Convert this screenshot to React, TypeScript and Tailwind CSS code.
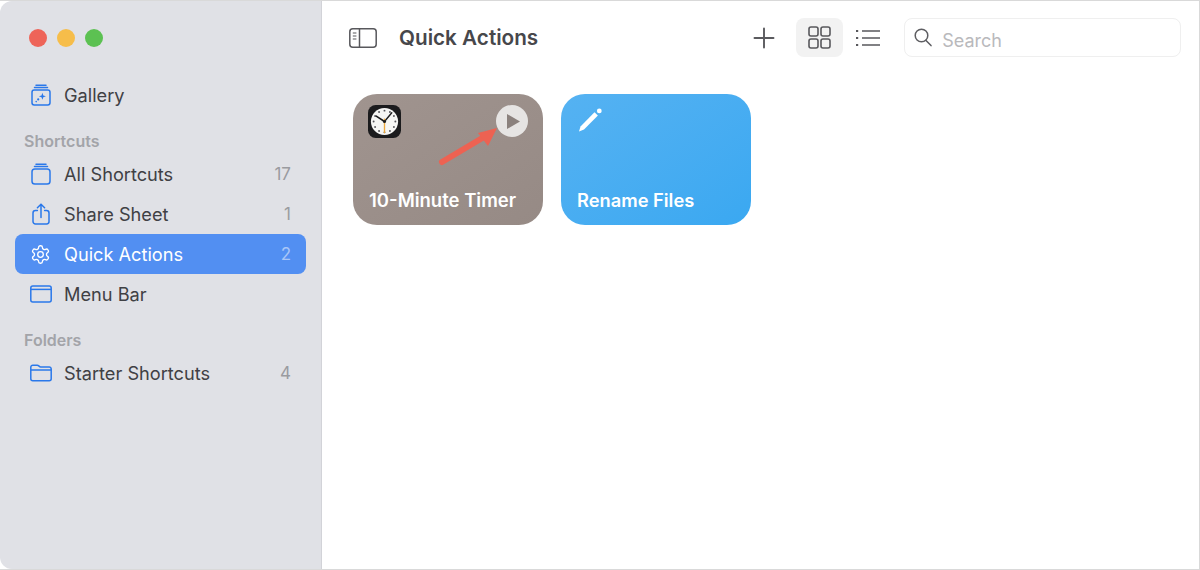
import React from "react";

const blue = "#2a78ea";

function GalleryIcon() {
  return (
    <svg width="20" height="22" viewBox="0 0 20 22" fill="none" stroke={blue} strokeWidth="1.5" strokeLinecap="round">
      <path d="M5 1.2h10" />
      <path d="M3.5 3.6h13" />
      <rect x="1" y="6" width="18" height="15" rx="2.2" />
      <path d="M11.4 8.8l.9 2.6 2.6.9-2.6.9-.9 2.6-.9-2.6-2.6-.9 2.6-.9z" fill={blue} stroke="none" />
      <circle cx="7.2" cy="15.4" r="1.1" fill={blue} stroke="none" />
      <circle cx="5.2" cy="17.6" r=".8" fill={blue} stroke="none" />
    </svg>
  );
}
function AllIcon() {
  return (
    <svg width="20" height="22" viewBox="0 0 20 22" fill="none" stroke={blue} strokeWidth="1.5" strokeLinecap="round">
      <path d="M5 1.2h10" />
      <path d="M3.5 3.6h13" />
      <rect x="1" y="6" width="18" height="15" rx="2.8" />
    </svg>
  );
}
function ShareIcon() {
  return (
    <svg width="18" height="22" viewBox="0 0 18 22" fill="none" stroke={blue} strokeWidth="1.5" strokeLinecap="round" strokeLinejoin="round">
      <path d="M5.4 7.6H3.4A2.4 2.4 0 0 0 1 10v8.6A2.4 2.4 0 0 0 3.4 21h11.2a2.4 2.4 0 0 0 2.4-2.4V10a2.4 2.4 0 0 0-2.4-2.4h-2" />
      <path d="M9 14.4V1.4" />
      <path d="M5.4 4.8L9 1.2l3.6 3.6" />
    </svg>
  );
}
function GearIcon() {
  return (
    <svg className="-ml-[2px]" width="21" height="21" viewBox="0 0 24 24" fill="none" stroke="#ffffff" strokeWidth="1.5" strokeLinecap="round" strokeLinejoin="round">
      <path d="M12.22 2h-.44a2 2 0 0 0-2 2v.18a2 2 0 0 1-1 1.73l-.43.25a2 2 0 0 1-2 0l-.15-.08a2 2 0 0 0-2.73.73l-.22.38a2 2 0 0 0 .73 2.73l.15.1a2 2 0 0 1 1 1.72v.51a2 2 0 0 1-1 1.74l-.15.09a2 2 0 0 0-.73 2.73l.22.38a2 2 0 0 0 2.73.73l.15-.08a2 2 0 0 1 2 0l.43.25a2 2 0 0 1 1 1.73V20a2 2 0 0 0 2 2h.44a2 2 0 0 0 2-2v-.18a2 2 0 0 1 1-1.73l.43-.25a2 2 0 0 1 2 0l.15.08a2 2 0 0 0 2.73-.73l.22-.39a2 2 0 0 0-.73-2.73l-.15-.08a2 2 0 0 1-1-1.74v-.5a2 2 0 0 1 1-1.74l.15-.09a2 2 0 0 0 .73-2.73l-.22-.38a2 2 0 0 0-2.73-.73l-.15.08a2 2 0 0 1-2 0l-.43-.25a2 2 0 0 1-1-1.73V4a2 2 0 0 0-2-2z" />
      <circle cx="12" cy="12" r="3.2" />
    </svg>
  );
}
function MenuBarIcon() {
  return (
    <svg width="22" height="18" viewBox="0 0 22 18" fill="none" stroke={blue} strokeWidth="1.5">
      <rect x=".8" y="1" width="20.4" height="16" rx="2" />
      <path d="M.8 4.4h20.4" />
    </svg>
  );
}
function FolderIcon() {
  return (
    <svg width="22" height="18" viewBox="0 0 22 18" fill="none" stroke={blue} strokeWidth="1.5" strokeLinejoin="round">
      <path d="M.8 3.2A2 2 0 0 1 2.8 1.2h4.4c.9 0 1.2.3 1.8.9.5.6.9.9 1.7.9h8.5a2 2 0 0 1 2 2v9.8a2 2 0 0 1-2 2H2.8a2 2 0 0 1-2-2z" />
      <path d="M.8 6h20.4" />
    </svg>
  );
}

function Row({ icon, label, count, active }: { icon: React.ReactNode; label: string; count?: string; active?: boolean }) {
  return (
    <div className={`mx-[15px] flex h-10 items-center rounded-[8px] pr-[15px] pl-[14px] ${active ? "bg-[#528ff2]" : ""}`}>
      <div className="flex w-[24px] justify-center">{icon}</div>
      <span className={`ml-[11px] flex-1 pt-[2px] text-[18.2px] ${active ? "text-white" : "text-[#3f4044]"}`}>{label}</span>
      {count && <span className={`pt-[2px] text-[17px] ${active ? "text-[#a9c6f7]" : "text-[#9a9ba0]"}`}>{count}</span>}
    </div>
  );
}

function Clock() {
  const ticks = Array.from({ length: 12 }, (_, i) => i);
  return (
    <svg width="33" height="33" viewBox="0 0 34 34">
      <rect width="34" height="34" rx="8" fill="#1b1b1d" />
      <circle cx="17" cy="17" r="14" fill="#f6f6f4" />
      {ticks.map((i) => {
        const a = (i * Math.PI) / 6;
        return <circle key={i} cx={17 + 11.2 * Math.sin(a)} cy={17 - 11.2 * Math.cos(a)} r="1" fill="#55555a" />;
      })}
      <path d="M17 17L8.5 11.5" stroke="#1b1b1d" strokeWidth="1.6" strokeLinecap="round" />
      <path d="M17 17L24.5 8" stroke="#1b1b1d" strokeWidth="1.4" strokeLinecap="round" />
      <path d="M17 14V29" stroke="#eda83c" strokeWidth="1.4" />
      <circle cx="17" cy="17" r="1.6" fill="#1b1b1d" />
    </svg>
  );
}

export default function App() {
  return (
    <div className="flex h-[570px] w-[1200px] overflow-hidden border-y border-r border-[#d9d9d9] bg-white font-['Inter',sans-serif]">
      <aside className="w-[322px] shrink-0 rounded-tl-[12px] rounded-bl-[12px] border-r border-[#d2d3d8] bg-[#e0e1e6]">
        <div className="flex gap-[10px] pt-[28px] pl-[29px]">
          <span className="h-[18px] w-[18px] rounded-full bg-[#ee6459]" />
          <span className="h-[18px] w-[18px] rounded-full bg-[#f6bd4a]" />
          <span className="h-[18px] w-[18px] rounded-full bg-[#5cc152]" />
        </div>
        <div className="mt-[28px]">
          <Row icon={<GalleryIcon />} label="Gallery" />
        </div>
        <div className="mt-[16px] flex h-[23px] items-center pb-[3px] pl-[24px] text-[16px] font-semibold text-[#a3a4a9]">Shortcuts</div>
        <Row icon={<AllIcon />} label="All Shortcuts" count="17" />
        <Row icon={<ShareIcon />} label="Share Sheet" count="1" />
        <Row icon={<GearIcon />} label="Quick Actions" count="2" active />
        <Row icon={<MenuBarIcon />} label="Menu Bar" />
        <div className="mt-[16px] flex h-[23px] items-center pb-[3px] pl-[24px] text-[16px] font-semibold text-[#a3a4a9]">Folders</div>
        <Row icon={<FolderIcon />} label="Starter Shortcuts" count="4" />
      </aside>

      <main className="flex-1">
        <header className="flex h-[75px] items-center pb-[2px]">
          <svg className="ml-[27px]" width="28" height="20" viewBox="0 0 28 20" fill="none" stroke="#58585c" strokeWidth="1.5">
            <rect x=".8" y=".8" width="26.4" height="18.4" rx="3" />
            <path d="M10.5 .8v18.4" />
            <path d="M3.8 5h3.6M3.8 8h3.6M3.8 11h3.6" strokeWidth="1.2" />
          </svg>
          <h1 className="mt-[1px] ml-[22px] text-[20.7px] font-semibold text-[#47474b]">Quick Actions</h1>
          <svg className="ml-[215px]" width="22" height="22" viewBox="0 0 22 22" fill="none" stroke="#5a5a5e" strokeWidth="1.9" strokeLinecap="round">
            <path d="M11 1.5v19M1.5 11h19" />
          </svg>
          <div className="ml-[21px] flex h-[39px] w-[47px] items-center justify-center rounded-[8px] bg-[#f2f2f2]">
            <svg width="23" height="23" viewBox="0 0 23 23" fill="none" stroke="#58585c" strokeWidth="1.6">
              <rect x="1" y="1" width="9" height="9" rx="2" />
              <rect x="13" y="1" width="9" height="9" rx="2" />
              <rect x="1" y="13" width="9" height="9" rx="2" />
              <rect x="13" y="13" width="9" height="9" rx="2" />
            </svg>
          </div>
          <svg className="ml-[13px]" width="24" height="18" viewBox="0 0 24 18" fill="none" stroke="#58585c" strokeWidth="1.5">
            <path d="M6 2h18M6 9h18M6 16h18" />
            <path d="M0 2h2.2M0 9h2.2M0 16h2.2" strokeWidth="2" />
          </svg>
          <div className="ml-[24px] flex h-[39px] w-[277px] items-center rounded-[8px] border border-[#efefef] bg-white pl-[9px]">
            <svg width="18" height="19" viewBox="0 0 18 19" fill="none" stroke="#5e5e62" strokeWidth="1.5" strokeLinecap="round">
              <circle cx="7.5" cy="7.5" r="6.3" />
              <path d="M12 12.4L17 17.6" />
            </svg>
            <span className="mt-[6px] ml-[10px] text-[18px] text-[#b9b9bc]">Search</span>
          </div>
        </header>

        <div className="flex gap-[18px] pt-[18px] pl-[31px]">
          <div className="relative flex h-[131px] w-[190px] flex-col justify-between rounded-[24px] bg-gradient-to-br from-[#a0948f] to-[#968a85] pt-[11px] pr-[15px] pb-[10px] pl-[15px]">
            <div className="flex items-start justify-between">
              <Clock />
              <div className="flex h-[32px] w-[32px] items-center justify-center rounded-full bg-[#e6e4e3]">
                <svg className="ml-[3px]" width="15" height="17" viewBox="0 0 15 17">
                  <path d="M1 1l13 7.5L1 16z" fill="#8b817d" />
                </svg>
              </div>
            </div>
            <span className="ml-[1px] text-[18.5px] font-semibold text-white">10-Minute Timer</span>
            <svg className="absolute top-[32px] left-[85px]" width="64" height="40" viewBox="0 0 64 40" fill="none">
              <path d="M4 36L46 11" stroke="#ed6252" strokeWidth="6" strokeLinecap="round" />
              <path d="M59 2L40 7l10 13z" fill="#ed6252" />
            </svg>
          </div>

          <div className="flex h-[131px] w-[190px] flex-col justify-between rounded-[24px] bg-gradient-to-br from-[#55b2f2] to-[#3aa8f1] pt-[13px] pr-[15px] pb-[11px] pl-[16px]">
            <svg width="26" height="26" viewBox="0 0 26 26" fill="#ffffff">
              <path d="M2 24.5l1.5-5L17.5 5.2l3.4 3.4L7 22.6z" />
              <circle cx="22.3" cy="3.9" r="2.4" />
            </svg>
            <span className="text-[18.3px] font-semibold text-white">Rename Files</span>
          </div>
        </div>
      </main>
    </div>
  );
}
